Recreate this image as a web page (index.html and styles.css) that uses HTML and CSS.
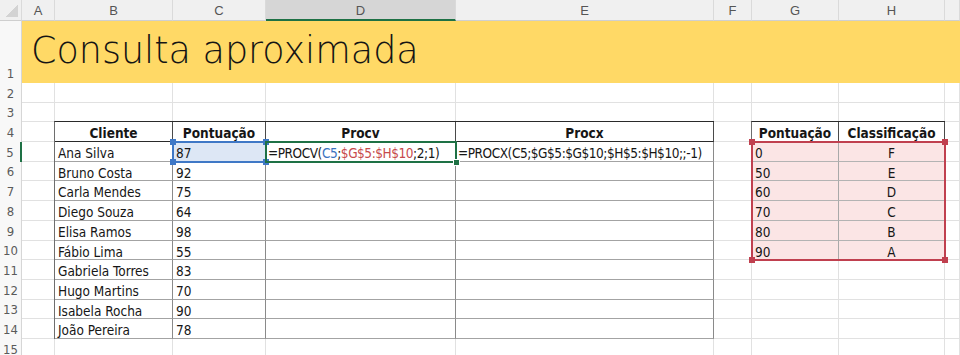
FILE: index.html
```html
<!DOCTYPE html>
<html lang="pt-BR">
<head>
    <meta charset="UTF-8">
    <title>Consulta aproximada</title>
    <link rel="stylesheet" href="styles.css">
</head>
<body>
    <div class="sheet">
        <!-- cabeçalho das colunas -->
        <div class="ch corner"></div>
        <div class="ch">A</div><div class="ch">B</div><div class="ch">C</div><div class="ch sel">D</div><div class="ch">E</div><div class="ch">F</div><div class="ch">G</div><div class="ch">H</div><div class="ch"></div>

        <!-- linha 1: título -->
        <div class="rh">1</div>
        <div class="title">Consulta aproximada</div>

        <div class="rh">2</div>
        <div class="cl"></div><div class="cl"></div><div class="cl"></div><div class="cl"></div><div class="cl"></div><div class="cl"></div><div class="cl"></div><div class="cl"></div><div class="cl"></div>

        <div class="rh">3</div>
        <div class="cl"></div><div class="cl"></div><div class="cl"></div><div class="cl"></div><div class="cl"></div><div class="cl"></div><div class="cl"></div><div class="cl"></div><div class="cl"></div>

        <div class="rh">4</div>
        <div class="cl"></div>
        <div class="cl th">Cliente</div><div class="cl th">Pontuação</div><div class="cl th">Procv</div><div class="cl th">Procx</div>
        <div class="cl"></div>
        <div class="cl th">Pontuação</div><div class="cl th">Classificação</div>
        <div class="cl"></div>

        <div class="rh sel">5</div>
        <div class="cl"></div>
        <div class="cl t">Ana Silva</div><div class="cl t ref-cell">87</div>
        <div class="cl t fx">=PROCV(<span class="f-blue">C5</span>;<span class="f-red">$G$5:$H$10</span>;2;1)</div>
        <div class="cl t fx">=PROCX(C5;$G$5:$G$10;$H$5:$H$10;;-1)</div>
        <div class="cl"></div>
        <div class="cl lk">0</div><div class="cl lk mid">F</div>
        <div class="cl"></div>

        <div class="rh">6</div>
        <div class="cl"></div>
        <div class="cl t">Bruno Costa</div><div class="cl t">92</div><div class="cl t"></div><div class="cl t"></div>
        <div class="cl"></div>
        <div class="cl lk">50</div><div class="cl lk mid">E</div>
        <div class="cl"></div>

        <div class="rh">7</div>
        <div class="cl"></div>
        <div class="cl t">Carla Mendes</div><div class="cl t">75</div><div class="cl t"></div><div class="cl t"></div>
        <div class="cl"></div>
        <div class="cl lk">60</div><div class="cl lk mid">D</div>
        <div class="cl"></div>

        <div class="rh">8</div>
        <div class="cl"></div>
        <div class="cl t">Diego Souza</div><div class="cl t">64</div><div class="cl t"></div><div class="cl t"></div>
        <div class="cl"></div>
        <div class="cl lk">70</div><div class="cl lk mid">C</div>
        <div class="cl"></div>

        <div class="rh">9</div>
        <div class="cl"></div>
        <div class="cl t">Elisa Ramos</div><div class="cl t">98</div><div class="cl t"></div><div class="cl t"></div>
        <div class="cl"></div>
        <div class="cl lk">80</div><div class="cl lk mid">B</div>
        <div class="cl"></div>

        <div class="rh">10</div>
        <div class="cl"></div>
        <div class="cl t">Fábio Lima</div><div class="cl t">55</div><div class="cl t"></div><div class="cl t"></div>
        <div class="cl"></div>
        <div class="cl lk">90</div><div class="cl lk mid">A</div>
        <div class="cl"></div>

        <div class="rh">11</div>
        <div class="cl"></div>
        <div class="cl t">Gabriela Torres</div><div class="cl t">83</div><div class="cl t"></div><div class="cl t"></div>
        <div class="cl"></div><div class="cl"></div><div class="cl"></div><div class="cl"></div>

        <div class="rh">12</div>
        <div class="cl"></div>
        <div class="cl t">Hugo Martins</div><div class="cl t">70</div><div class="cl t"></div><div class="cl t"></div>
        <div class="cl"></div><div class="cl"></div><div class="cl"></div><div class="cl"></div>

        <div class="rh">13</div>
        <div class="cl"></div>
        <div class="cl t">Isabela Rocha</div><div class="cl t">90</div><div class="cl t"></div><div class="cl t"></div>
        <div class="cl"></div><div class="cl"></div><div class="cl"></div><div class="cl"></div>

        <div class="rh">14</div>
        <div class="cl"></div>
        <div class="cl t">João Pereira</div><div class="cl t">78</div><div class="cl t"></div><div class="cl t"></div>
        <div class="cl"></div><div class="cl"></div><div class="cl"></div><div class="cl"></div>

        <div class="rh">15</div>
        <div class="cl"></div><div class="cl"></div><div class="cl"></div><div class="cl"></div><div class="cl"></div><div class="cl"></div><div class="cl"></div><div class="cl"></div><div class="cl"></div>

        <!-- bordas externas das tabelas e seleções (ficam por cima das células) -->
        <div class="frame frame-clientes"></div>
        <div class="frame frame-faixas"></div>
        <div class="ref ref-blue"></div>
        <div class="ref ref-red"></div>
        <div class="active"></div>
    </div>
</body>
</html>
```

FILE: styles.css
```css
body {
    margin: 0;
    background: #fff;
    overflow: hidden;
}

.sheet {
    position: relative;
    display: grid;
    grid-template-columns: 22px 33px 118px 93px 190px 258px 38px 87px 106px 1fr;
    grid-template-rows: 21px 62px repeat(14, 19.7px);
    width: 960px;
    height: 355px;
    overflow: hidden;
    font-family: "DejaVu Sans Condensed", Roboto, sans-serif;
    font-stretch: condensed;
    color: #161616;
}

/* cabeçalhos de coluna e linha */
.ch {
    box-sizing: border-box;
    background: #f0f0f0;
    border-right: 1px solid #dadada;
    border-bottom: 1px solid #cfcfcf;
    font: 13px/21px "Liberation Sans", Arial, sans-serif;
    color: #555;
    text-align: center;
}

.ch.sel {
    background: #d6d6d6;
    border-bottom: 2px solid #1e7145;
}

.corner {
    background: #f0f0f0 linear-gradient(135deg, transparent 50%, #d3d3d3 50%) no-repeat right 3px bottom 3px / 12px 12px;
}

.rh {
    box-sizing: border-box;
    display: flex;
    align-items: flex-end;
    justify-content: center;
    background: #f8f8f8;
    border-right: 1px solid #d6d6d6;
    font-size: 13px;
    line-height: 18px;
    color: #5a5a5a;
}

.rh.sel {
    border-right: 2px solid #1e7145;
}

.title {
    grid-column: span 9;
    background: #ffd966;
    padding: 12px 0 0 9px;
    font-family: "DejaVu Sans", sans-serif;
    font-size: 36.5px;
    font-weight: 200;
    font-stretch: normal;
    line-height: 36px;
    color: #141414;
    white-space: nowrap;
}

/* células */
.cl {
    box-sizing: border-box;
    border-right: 1px solid #e1e1e1;
    border-bottom: 1px solid #e1e1e1;
    padding: 3px 3px 0;
    font-size: 13.5px;
    line-height: 17px;
    white-space: nowrap;
    overflow: hidden;
}

.th {
    font-weight: bold;
    text-align: center;
    border-right-color: #4a4a4a;
    border-bottom-color: #2a2a2a;
}

.t {
    border-right-color: #8a8a8a;
    border-bottom-color: #a3a3a3;
}

.fx {
    padding-left: 2px;
    letter-spacing: -0.45px;
}

.lk {
    background: #fbe5e5;
    border-right-color: #a9a9a9;
    border-bottom-color: #b3b3b3;
}

.mid {
    text-align: center;
}

.ref-cell {
    background: #dde7f5;
}

.f-blue {
    color: #3b73bf;
}

.f-red {
    color: #c74a4c;
}

/* bordas por cima da grade */
.frame {
    position: absolute;
    top: -1px;
    left: -1px;
    right: 0;
    bottom: 0;
    border-top: 1px solid #2a2a2a;
    border-left: 1px solid #6e6e6e;
}

.frame-clientes {
    grid-row: 5 / 16;
    grid-column: 3 / 7;
}

.frame-faixas {
    grid-row: 5 / 12;
    grid-column: 8 / 10;
}

.ref {
    position: absolute;
    inset: -3px;
    background:
        linear-gradient(var(--c), var(--c)) left top / 6px 6px no-repeat,
        linear-gradient(var(--c), var(--c)) right top / 6px 6px no-repeat,
        linear-gradient(var(--c), var(--c)) left bottom / 6px 6px no-repeat,
        linear-gradient(var(--c), var(--c)) right bottom / 6px 6px no-repeat;
}

.ref::before {
    content: "";
    position: absolute;
    inset: 2px;
    border: 2px solid var(--c);
}

.ref-blue {
    --c: #3f78c6;
    grid-row: 6 / 7;
    grid-column: 4 / 5;
}

.ref-red {
    --c: #c0404f;
    grid-row: 6 / 12;
    grid-column: 8 / 10;
}

.active {
    position: absolute;
    inset: -1px;
    grid-row: 6 / 7;
    grid-column: 5 / 6;
    border: 2px solid #1e7145;
}

.active::after {
    content: "";
    position: absolute;
    right: -5px;
    bottom: -5px;
    width: 5px;
    height: 5px;
    background: #1e7145;
    border: 1px solid #fff;
}
```
